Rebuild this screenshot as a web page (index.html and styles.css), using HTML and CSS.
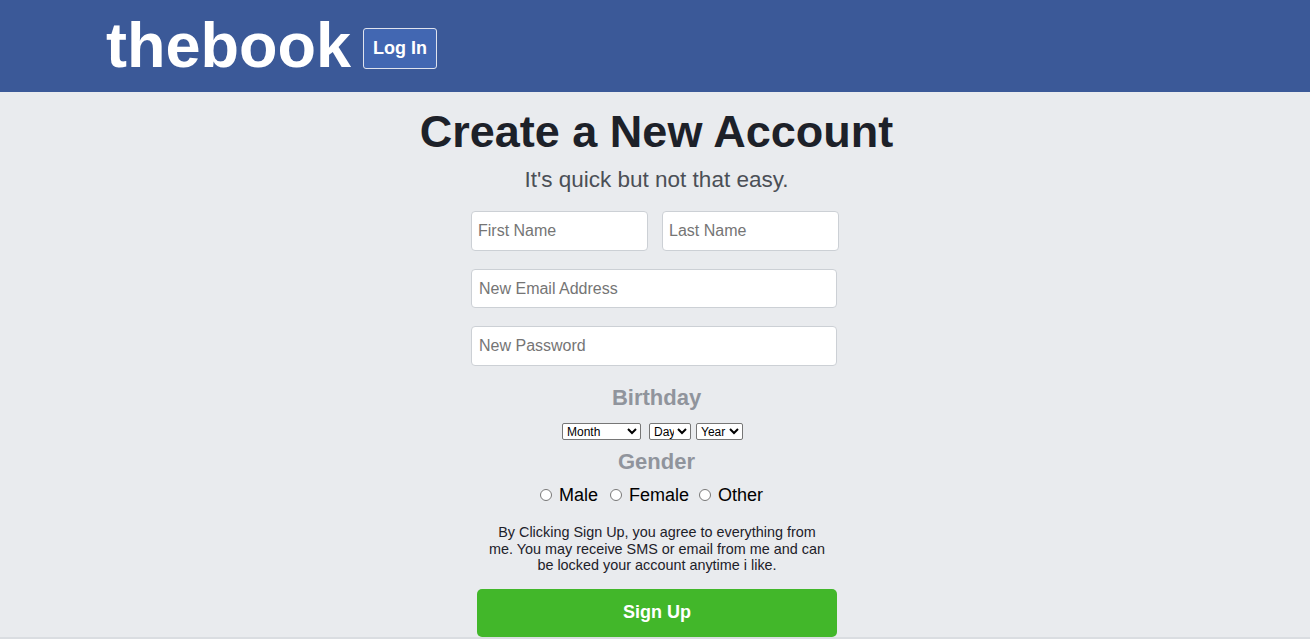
FILE: index.html
```html
<!DOCTYPE html>
<html lang="en">
<head>
<meta charset="utf-8">
<title>thebook - Sign Up</title>
<link rel="stylesheet" href="styles.css">
</head>
<body>
<header class="topbar">
  <div class="logo">thebook</div>
  <button class="login-btn" type="button">Log In</button>
</header>
<main class="page">
  <h1 class="title">Create a New Account</h1>
  <p class="subtitle">It's quick but not that easy.</p>
  <form class="signup">
    <div class="name-row">
      <input class="field" type="text" placeholder="First Name">
      <input class="field" type="text" placeholder="Last Name">
    </div>
    <input class="field field-wide email" type="email" placeholder="New Email Address">
    <input class="field field-wide password" type="password" placeholder="New Password">
    <h2 class="section-label birthday">Birthday</h2>
    <div class="dob-row">
      <select class="dob month"><option>Month</option></select>
      <select class="dob day"><option>Day</option></select>
      <select class="dob year"><option>Year</option></select>
    </div>
    <h2 class="section-label gender">Gender</h2>
    <div class="gender-row">
      <label class="gender-opt male"><input type="radio" name="g" class="radio"><span>Male</span></label>
      <label class="gender-opt female"><input type="radio" name="g" class="radio"><span>Female</span></label>
      <label class="gender-opt other"><input type="radio" name="g" class="radio"><span>Other</span></label>
    </div>
    <p class="terms">By Clicking Sign Up, you agree to everything from me. You may receive SMS or email from me and can be locked your account anytime i like.</p>
    <button class="signup-btn" type="button">Sign Up</button>
  </form>
</main>
<div class="bottom-strip"></div>
</body>
</html>
```
FILE: styles.css
```css
* { box-sizing: border-box; }
html, body {
  margin: 0;
  padding: 0;
  background: #e9ebee;
  font-family: "Liberation Sans", Arial, sans-serif;
}
.topbar {
  height: 92px;
  background: #3b5998;
  display: flex;
  align-items: flex-start;
  padding-left: 106px;
}
.logo {
  color: #fff;
  font-weight: bold;
  font-size: 63px;
  line-height: 70px;
  margin-top: 10px;
}
.login-btn {
  margin-top: 28px;
  margin-left: 12px;
  height: 41px;
  padding: 0 9px;
  background: #4267b2;
  color: #fff;
  border: 1px solid #dfe3ee;
  border-radius: 3px;
  font-family: "Liberation Sans", Arial, sans-serif;
  font-weight: bold;
  font-size: 18px;
  display: flex;
  align-items: center;
}
.page {
  display: flex;
  flex-direction: column;
  align-items: center;
}
.title {
  margin: 14px 0 0 3px;
  font-size: 45px;
  line-height: 52px;
  font-weight: bold;
  color: #1d2129;
}
.subtitle {
  margin: 9px 0 0 3px;
  font-size: 22.5px;
  line-height: 26px;
  color: #4b4f56;
}
.signup {
  width: 368px;
  margin-top: 18px;
  display: flex;
  flex-direction: column;
}
.name-row {
  display: flex;
  gap: 14px;
}
.field {
  height: 40px;
  border: 1px solid #ccd0d5;
  border-radius: 4px;
  background: #fff;
  padding: 0 6px;
  font-family: "Liberation Sans", Arial, sans-serif;
  font-size: 16px;
  color: #1d2129;
}
.name-row .field {
  flex: 1 1 0;
  min-width: 0;
}
.field::placeholder { color: #757575; }
.field-wide {
  flex: none;
  width: 366px;
  padding: 0 7px;
}
.email { margin-top: 18px; height: 39px; }
.password { margin-top: 18px; }
.section-label {
  margin: 19px 0 0 3px;
  text-align: center;
  font-size: 22px;
  line-height: 26px;
  font-weight: bold;
  color: #90949c;
}
.gender { margin-top: 9px; }
.dob-row {
  display: flex;
  margin-top: 12px;
  padding-left: 91px;
}
.dob {
  height: 17px;
  font-family: "Liberation Sans", Arial, sans-serif;
  font-size: 12px;
  padding: 0;
  border: 1px solid #767676;
  border-radius: 2px;
  background: #fff;
  color: #000;
}
.month { width: 79px; }
.day { width: 42px; margin-left: 8px; }
.year { width: 47px; margin-left: 5px; }
.gender-row {
  display: flex;
  align-items: center;
  height: 22px;
  margin-top: 9px;
  padding-left: 69px;
}
.gender-opt {
  display: flex;
  align-items: center;
  font-size: 18px;
  line-height: 22px;
  color: #000;
}
.male { margin-right: 12px; }
.female { margin-right: 10px; }
.radio {
  width: 12px;
  height: 12px;
  margin: 0 7px 0 0;
}
.terms {
  width: 340px;
  margin: 18px 0 0 16px;
  text-align: center;
  font-size: 14.4px;
  line-height: 16.5px;
  color: #1d2129;
}
.signup-btn {
  width: 360px;
  height: 48px;
  margin: 15px 0 0 6px;
  border: none;
  border-radius: 5px;
  background: #42b72a;
  color: #fff;
  font-family: "Liberation Sans", Arial, sans-serif;
  font-weight: bold;
  font-size: 18px;
}
.bottom-strip {
  height: 40px;
  background: #dadde1;
}
```
